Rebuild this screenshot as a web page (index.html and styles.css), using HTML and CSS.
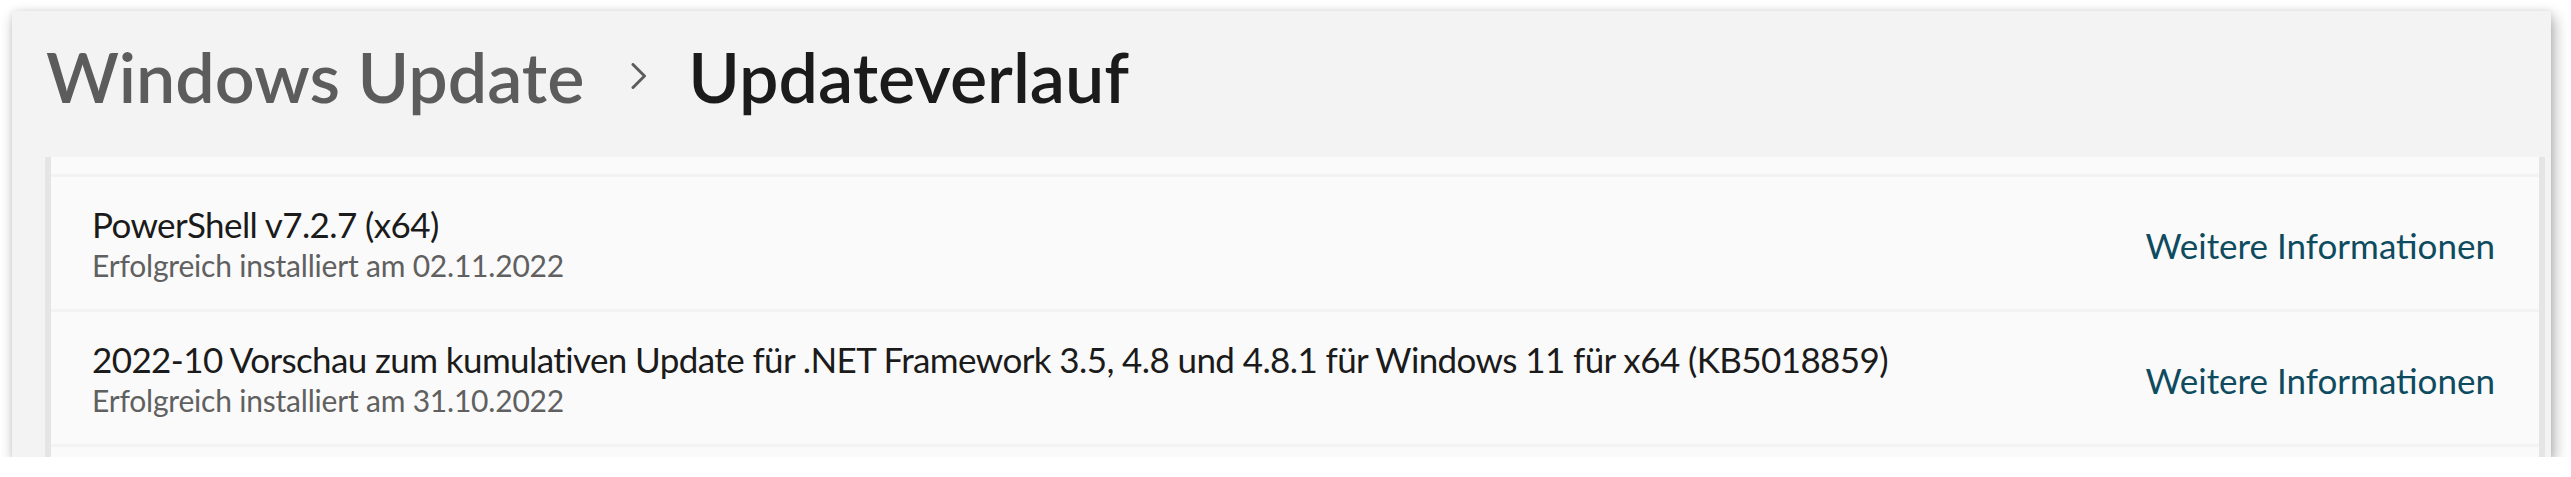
FILE: index.html
```html
<!DOCTYPE html>
<html lang="de">
<head>
  <meta charset="UTF-8" />
  <title>Updateverlauf</title>
  <link rel="stylesheet" href="styles.css">
</head>
<body>
  <div class="window">
    <div class="header">
      <span class="crumb">Windows Update</span>
      <svg class="chevron" width="16" height="26" viewBox="0 0 16 26">
        <path d="M2 1.5 L13.5 13 L2 24.5" fill="none" stroke="#5d5d5d" stroke-width="3" stroke-linecap="round" stroke-linejoin="round"/>
      </svg>
      <span class="current">Updateverlauf</span>
    </div>

    <div class="panel">
      <div class="row row-cut"></div>

      <div class="row">
        <div class="info">
          <div class="name">PowerShell v7.2.7 (x64)</div>
          <div class="status">Erfolgreich installiert am 02.11.2022</div>
        </div>
        <a class="more" href="#">Weitere Informationen</a>
      </div>

      <div class="row">
        <div class="info">
          <div class="name">2022-10 Vorschau zum kumulativen Update für .NET Framework 3.5, 4.8 und 4.8.1 für Windows 11 für x64 (KB5018859)</div>
          <div class="status">Erfolgreich installiert am 31.10.2022</div>
        </div>
        <a class="more" href="#">Weitere Informationen</a>
      </div>

      <div class="row row-cut"></div>
    </div>
  </div>
</body>
</html>
```

FILE: styles.css
```css
body {
  margin: 0;
  background-color: #fff;
  font-family: Lato, "Open Sans", sans-serif;
}
.window {
  margin: 11px 0 0 12px;
  width: 2539px;
  height: 446px;
  background-color: #f3f3f3;
  box-shadow: 3px 6px 14px rgba(0, 0, 0, 0.32), 0 0 6px rgba(0, 0, 0, 0.08);
  overflow: hidden;
  display: flex;
  flex-direction: column;
}
.header {
  height: 146px;
  box-sizing: border-box;
  padding: 0 0 16px 34px;
  flex-shrink: 0;
  display: flex;
  align-items: center;
  font-size: 70px;
  font-weight: 600;
  line-height: 1;
}
.crumb {
  color: #5c5c5c;
}
.chevron {
  margin: 0 41px 0 47px;
}
.current {
  color: #1b1b1b;
}
.panel {
  flex: 1;
  min-height: 0;
  overflow: hidden;
  margin: 0 6px 0 33px;
  border-left: 6px solid #e5e5e5;
  border-right: 6px solid #e5e5e5;
  display: flex;
  flex-direction: column;
  gap: 3px;
  background-color: #f3f3f3;
}
.row {
  height: 132px;
  flex-shrink: 0;
  display: flex;
  align-items: center;
  justify-content: space-between;
  padding: 0 44px 0 41px;
  background-color: #fafafa;
}
.row-cut {
  height: 17px;
}
.info {
  padding-top: 4px;
}
.name {
  font-size: 35px;
  letter-spacing: -0.6px;
  color: #1b1b1b;
  line-height: 41px;
}
.status {
  font-size: 30px;
  letter-spacing: -0.2px;
  color: #606060;
  line-height: 41px;
}
.more {
  padding-top: 3px;
  font-size: 35px;
  color: #0f4b5f;
  text-decoration: none;
}
```
